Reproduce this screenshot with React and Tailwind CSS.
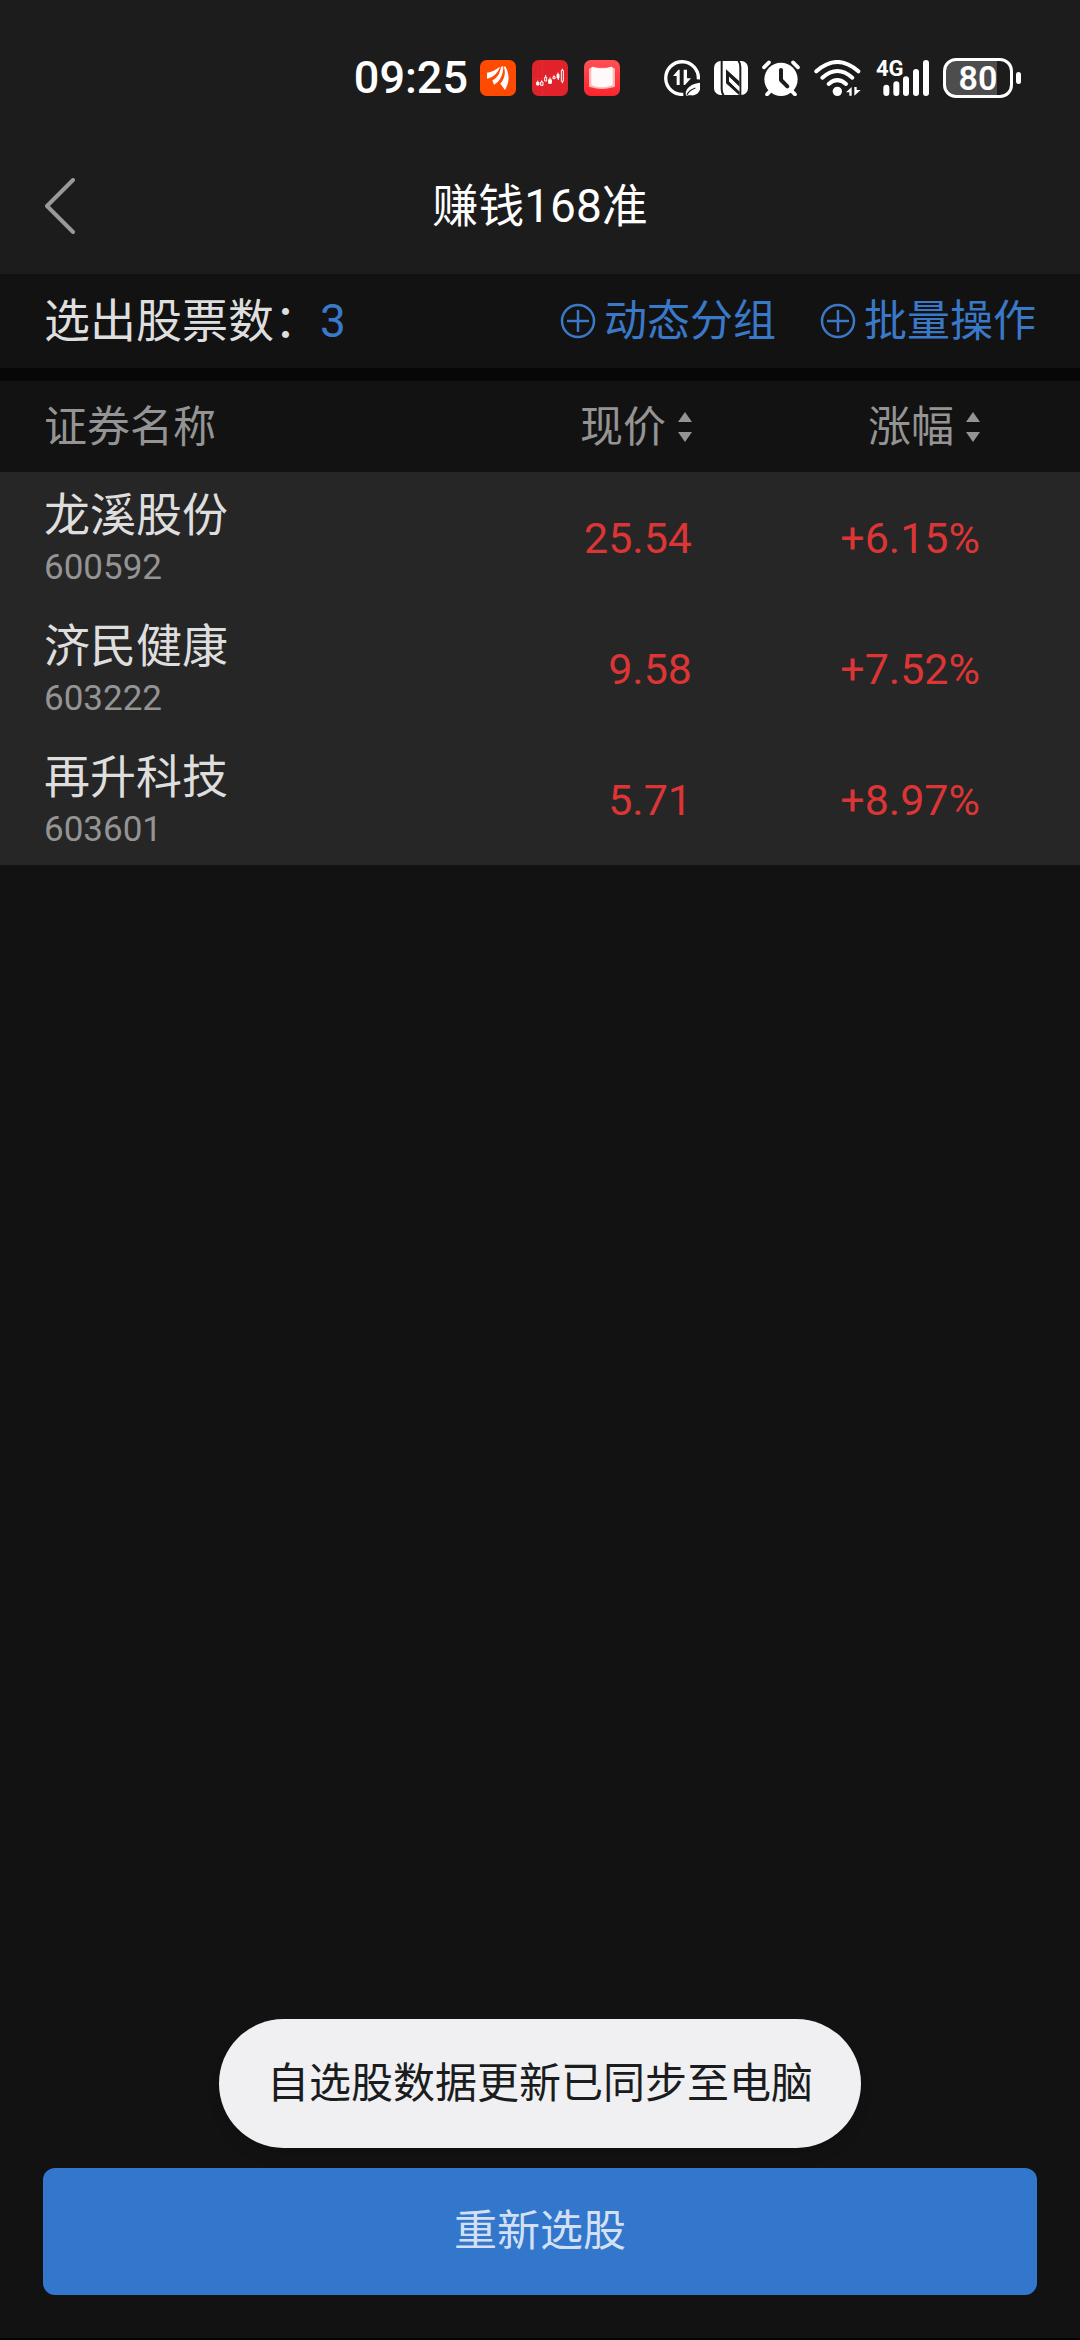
import React from "react";

const stocks = [
  { name: "龙溪股份", code: "600592", price: "25.54", change: "+6.15%" },
  { name: "济民健康", code: "603222", price: "9.58", change: "+7.52%" },
  { name: "再升科技", code: "603601", price: "5.71", change: "+8.97%" },
];

function BrokerIcon() {
  return (
    <svg className="size-9" viewBox="0 0 108 108" aria-hidden="true">
      <rect width="108" height="108" rx="20" fill="#ff4a04" />
      <g fill="#fff">
        <path d="M21 38C35 36 48 29 60 20C55 36 42 51 21 56Z" />
        <path d="M63 20L70 19C70 44 60 66 42 74L37 61C52 54 60 40 63 20Z" />
        <path d="M75 18C86 34 92 62 75 90L61 71C75 55 77 38 72 22Z" />
      </g>
    </svg>
  );
}

function CandlesIcon() {
  return (
    <svg className="size-9" viewBox="0 0 108 108" aria-hidden="true">
      <rect width="108" height="108" rx="20" fill="#e0222a" />
      <path d="M31 0V108M0 55H108" stroke="#e8474c" strokeWidth="1" />
      <g stroke="#fff" strokeWidth="3">
        <path d="M17 62V66M29 61V66M41 45V52M54 52V58M66 46V50M78 38V44M91 26V31M91 65V70M79 54V60" />
        <path d="M14 67H21V75H14ZM50 59H58V70H50ZM75 43H81V54H75Z" fill="#fff" />
        <path d="M26 66H33V76H26ZM38 52H44V63H38ZM63 50H69V56H63ZM88 31H94V64H88Z" fill="none" />
      </g>
    </svg>
  );
}

function BookIcon() {
  return (
    <svg className="size-9" viewBox="0 0 108 108" aria-hidden="true">
      <defs>
        <linearGradient id="bookBg" x1="0" y1="0" x2="0" y2="1">
          <stop offset="0" stopColor="#ff5055" />
          <stop offset="1" stopColor="#fb252c" />
        </linearGradient>
      </defs>
      <rect width="108" height="108" rx="20" fill="url(#bookBg)" />
      <path d="M15 28Q15 23 21 23H87Q93 23 93 28V78Q93 82 87 82Q54 92 21 82Q15 82 15 78Z" fill="#ffb9ba" />
      <path d="M22 24Q22 19 30 21Q54 30 78 21Q86 19 86 24V72Q86 77 80 77Q54 86 28 77Q22 77 22 72Z" fill="#fffafa" />
    </svg>
  );
}

function DataSaverIcon() {
  return (
    <svg className="size-9" viewBox="0 0 108 108" aria-hidden="true">
      <path d="M103 58A49 49 0 1 0 58 103" fill="none" stroke="#fff" strokeWidth="10" />
      <path d="M47 75V29H43L27 48H38V75ZM59 29V75H63L81 55H69V29Z" fill="#fff" />
      <path d="M110 68C112 88 104 108 82 106C76 106 72 104 68 108L65 103C64 84 84 70 110 68Z" fill="#fff" />
      <path d="M69 104C74 93 84 88 94 84" stroke="#1c1c1c" strokeWidth="4" fill="none" />
    </svg>
  );
}

function NfcIcon() {
  return (
    <svg className="h-9 w-[34px]" viewBox="0 0 102 108" aria-hidden="true">
      <rect y="3" width="102" height="102" rx="20" fill="#fff" />
      <path d="M23 2V88Q23 99 29 106M79 106V22Q79 9 73 2" fill="none" stroke="#1c1c1c" strokeWidth="6" />
      <path d="M36 28L76 64V80L45 50V64L76 94V106L36 70Z" fill="#1c1c1c" />
      <path d="M45 50L76 80V94L45 64Z" fill="#fff" />
    </svg>
  );
}

function AlarmIcon() {
  return (
    <svg className="h-9 w-[38px]" viewBox="0 0 114 108" aria-hidden="true">
      <circle cx="57" cy="58" r="50" fill="#fff" />
      <path d="M6 22L21 7M93 7L108 22M26 92L15 103M88 92L99 103" stroke="#fff" strokeWidth="11" strokeLinecap="round" />
      <path d="M57 30V60L76 79" fill="none" stroke="#1c1c1c" strokeWidth="12" strokeLinecap="round" strokeLinejoin="round" />
    </svg>
  );
}

function WifiIcon() {
  return (
    <svg className="h-9 w-12" viewBox="0 0 144 108" aria-hidden="true">
      <g fill="none" stroke="#fff" strokeWidth="12" strokeLinecap="round">
        <path d="M7 34Q70 -22 133 34" />
        <path d="M25 53Q70 13 115 53" />
        <path d="M44 72Q70 49 96 72" />
      </g>
      <circle cx="70" cy="94" r="14" fill="#fff" />
      <path d="M113 107V81L96 97H106V107ZM121 81V107L140 90H128V81Z" fill="#fff" />
    </svg>
  );
}

function SignalIcon() {
  return (
    <div className="relative h-9 w-[53px]">
      <svg className="h-9 w-[53px]" viewBox="0 0 159 108" aria-hidden="true">
        <path d="M31 83V99M61 73V99M90 58V99M120 36V99M150 9V99" stroke="#fff" strokeWidth="18" strokeLinecap="round" />
      </svg>
      <span className="absolute top-0 left-0 text-[22px] leading-[18px] font-bold">4G</span>
    </div>
  );
}

function BatteryIcon() {
  return (
    <div className="flex items-center gap-[3px]">
      <div className="flex h-10 w-[70px] items-center justify-center rounded-[13px] border-[3px] border-white bg-linear-to-r from-[#4d4d4d] from-80% to-[#1c1c1c] to-80% text-[34px] leading-[34px] font-semibold">
        80
      </div>
      <div className="h-3 w-[5px] rounded-full bg-white" />
    </div>
  );
}

function SortIcon() {
  return (
    <svg className="h-[30px] w-[14px] shrink-0" viewBox="0 0 14 30" aria-hidden="true">
      <path d="M7 0L14 10H0ZM0 20H14L7 30Z" fill="#949494" />
    </svg>
  );
}

function CirclePlusIcon() {
  return (
    <svg className="size-9 shrink-0" viewBox="0 0 36 36" fill="none" stroke="currentColor" strokeWidth="2.5" aria-hidden="true">
      <circle cx="18" cy="18" r="16" />
      <path d="M18 7V29M7 18H29" />
    </svg>
  );
}

function StatusBar() {
  return (
    <div className="flex items-center justify-end px-[59px] pt-[58px] pb-3">
      <span className="mr-3 text-[45px] leading-10 font-medium">09:25</span>
      <div className="mr-11 flex gap-4">
        <BrokerIcon />
        <CandlesIcon />
        <BookIcon />
      </div>
      <div className="flex items-center gap-[14px]">
        <DataSaverIcon />
        <NfcIcon />
        <AlarmIcon />
        <WifiIcon />
        <SignalIcon />
        <BatteryIcon />
      </div>
    </div>
  );
}

export default function App() {
  return (
    <div className='flex min-h-screen flex-col border-b-2 border-black bg-[#121212] font-[Roboto,"Noto_Sans_CJK_SC",sans-serif] text-white'>
      <header className="bg-[#1c1c1c]">
        <StatusBar />
        <div className="grid grid-cols-[1fr_auto_1fr] items-center px-11 pt-[66px] pb-[38px]">
          <button type="button" aria-label="返回" className="justify-self-start">
            <svg className="h-[56px] w-8" viewBox="0 0 32 56" fill="none" stroke="#999" strokeWidth="4" strokeLinecap="round" strokeLinejoin="round" aria-hidden="true">
              <path d="M29 2L3 28L29 54" />
            </svg>
          </button>
          <h1 className="text-[46px] leading-[60px]">赚钱168准</h1>
        </div>
      </header>

      <section className="flex items-center justify-between border-b-[13px] border-[#070707] px-11 py-[17px]">
        <p className="text-[46px] leading-[60px] text-[#dedede]">
          选出股票数：<span className="text-[#3a78c8]">3</span>
        </p>
        <div className="flex gap-11 text-[43px] leading-[60px] text-[#3a78c8]">
          <button type="button" className="flex items-center gap-2">
            <CirclePlusIcon />
            动态分组
          </button>
          <button type="button" className="flex items-center gap-2">
            <CirclePlusIcon />
            批量操作
          </button>
        </div>
      </section>

      <main className="flex-1">
        <table className="w-full table-fixed">
          <thead className="text-[43px] leading-[60px] text-[#949494]">
            <tr className="h-[91px]">
              <th scope="col" className="pl-11 text-left font-normal">证券名称</th>
              <th scope="col" className="w-72 font-normal">
                <button type="button" className="ml-auto flex items-center gap-3">
                  现价
                  <SortIcon />
                </button>
              </th>
              <th scope="col" className="w-[388px] pr-[100px] font-normal">
                <button type="button" className="ml-auto flex items-center gap-3">
                  涨幅
                  <SortIcon />
                </button>
              </th>
            </tr>
          </thead>
          <tbody className="bg-[#262626]">
            {stocks.map((stock) => (
              <tr key={stock.code} className="h-[131px] text-[43px] leading-[60px] text-[#dc3535]">
                <td className="pl-11">
                  <div className="text-[46px] leading-[60px] text-[#dedede]">{stock.name}</div>
                  <div className="text-[35px] leading-[46px] text-[#949494]">{stock.code}</div>
                </td>
                <td className="text-right">{stock.price}</td>
                <td className="pr-[100px] text-right">{stock.change}</td>
              </tr>
            ))}
          </tbody>
        </table>
      </main>

      <footer className="relative px-[43px] pb-[43px]">
        <div role="status" className="absolute bottom-full left-1/2 mb-5 -translate-x-1/2 rounded-full bg-[#f0f0f2] px-12 py-[34px] text-[42px] leading-[61px] whitespace-nowrap text-[#1a1c1e] shadow-lg">
          自选股数据更新已同步至电脑
        </div>
        <button type="button" className="w-full rounded-xl bg-[#3377cc] py-[33px] text-[43px] leading-[61px] text-[#d3e0f3]">
          重新选股
        </button>
      </footer>
    </div>
  );
}
